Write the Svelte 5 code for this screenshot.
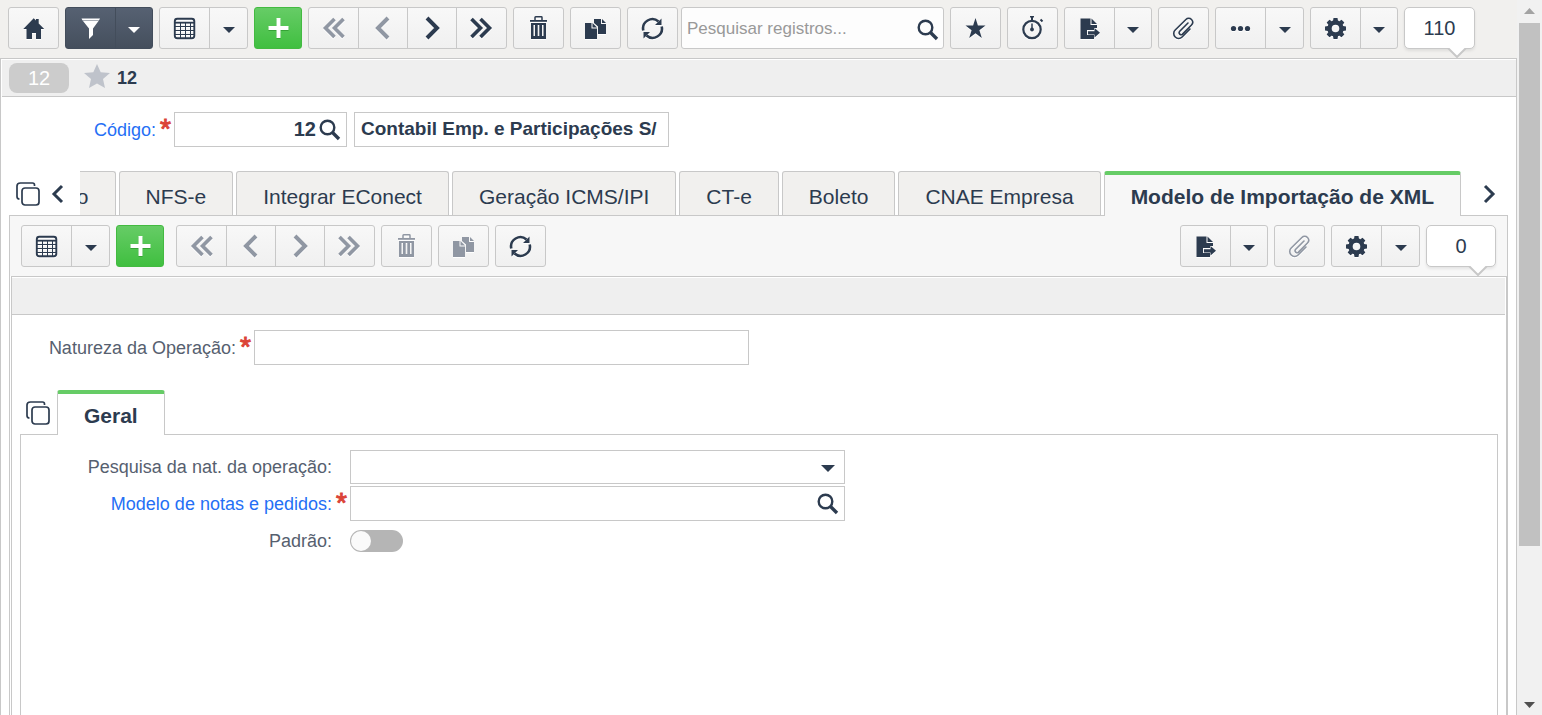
<script lang="ts">
  interface ITool {
    label: string;
    icon: string;
    menu?: boolean;
    disabled?: boolean;
    kind?: string;
  }

  const tabs = [
    "o",
    "NFS-e",
    "Integrar EConect",
    "Geração ICMS/IPI",
    "CT-e",
    "Boleto",
    "CNAE Empresa",
    "Modelo de Importação de XML",
  ];
  let activeTab = $state(tabs.length - 1);

  let search = $state("");
  let code = $state("12");
  let company = $state("Contabil Emp. e Participações S/");
  let nature = $state("");
  let natureSearch = $state("");
  let model = $state("");
  let isDefault = $state(false);

  const recordTools: ITool[] = [
    { label: "Excluir", icon: "trash" },
    { label: "Duplicar", icon: "pages" },
    { label: "Atualizar", icon: "refresh" },
  ];

  const actionTools: ITool[] = [
    { label: "Favoritos", icon: "star" },
    { label: "Histórico", icon: "timer" },
    { label: "Exportar", icon: "export", menu: true },
    { label: "Anexos", icon: "clip" },
    { label: "Mais", icon: "dots", menu: true, kind: "wide" },
    { label: "Configurações", icon: "gear", menu: true },
  ];

  const detailTools: ITool[] = [
    { label: "Exportar", icon: "export", menu: true },
    { label: "Anexos", icon: "clip", disabled: true },
    { label: "Configurações", icon: "gear", menu: true, kind: "wide" },
  ];

  const navTools = [
    { label: "Primeiro", icon: "first" },
    { label: "Anterior", icon: "prev" },
    { label: "Próximo", icon: "next" },
    { label: "Último", icon: "last" },
  ];
</script>

{#snippet icon(name: string)}
  <svg class="icon" width="25" height="24" viewBox="0 0 25 24" aria-hidden="true">
    {#if name === "home"}
      <path d="M12.7 2.3 15 4.600V3h2.700v4.500L23.200 13H20v10h-5v-6h-4v6H5.500V13H2.300z" fill="currentColor" />
    {:else if name === "filter"}
      <path d="M3.500 2.500h18.500l-.8 1.500H4.300zM5 5h15.500L15 12.500V19l-4 4V12.500z" fill="currentColor" />
      <path d="M4.500 4.500h16.500" stroke="currentColor" stroke-opacity=".5" />
    {:else if name === "table"}
      <path d="M8.500 7v15M13.500 7v15M18.500 7v15M3 10.500h19M3 14.500h19M3 18.500h19" stroke="currentColor" fill="none" />
      <rect x="2.800" y="2.800" width="19.500" height="19.500" rx="2.500" fill="none" stroke="currentColor" stroke-width="1.900" />
      <path d="M3 6.700h19" stroke="currentColor" stroke-width="1.800" />
    {:else if name === "plus"}
      <path d="M12.500 2v20M2.500 12h20" stroke="currentColor" stroke-width="4" />
    {:else if name === "first"}
      <path d="M13.500 3 4.500 12l9 9M22.500 3l-9 9 9 9" fill="none" stroke="currentColor" stroke-width="3.600" />
    {:else if name === "prev"}
      <path d="m17 2-10 10 10 10" fill="none" stroke="currentColor" stroke-width="4" />
    {:else if name === "next"}
      <path d="m7 2 10 10-10 10" fill="none" stroke="currentColor" stroke-width="4" />
    {:else if name === "last"}
      <path d="m2.500 3 9 9-9 9M11.500 3l9 9-9 9" fill="none" stroke="currentColor" stroke-width="3.600" />
    {:else if name === "trash"}
      <path d="M9 4V1.500Q9 .8 9.700.8h5.600q.7 0 .7.700V4" fill="none" stroke="currentColor" stroke-width="1.500" />
      <path d="M4 4h17v1.800H4z" fill="currentColor" />
      <path d="M5 7h15v16H5zM7.500 9v11h1.500V9zM11.700 9v11h1.600V9zM16 9v11h1.500V9z" fill="currentColor" fill-rule="evenodd" />
    {:else if name === "pages"}
      <path d="M11 3h7v5h5v10h-8v-7.500L11 7zM19 3l4 4h-4z" fill="currentColor" />
      <path d="M2 7h6.500v5.500H14V23H2zM9.500 7 14 11.500H9.500z" fill="currentColor" />
    {:else if name === "refresh"}
      <path d="M3.300 14.500A9.300 9.300 0 0 1 18.500 5.500M21.700 10.500A9.300 9.300 0 0 1 6.500 19.500" fill="none" stroke="currentColor" stroke-width="2.600" />
      <path d="M21.500 2.500V9h-6.500zM3.500 22.500V16H10z" fill="currentColor" />
    {:else if name === "search"}
      <circle cx="10.500" cy="10.500" r="6.800" fill="none" stroke="currentColor" stroke-width="2.400" />
      <path d="m15 15 7 7" stroke="currentColor" stroke-width="3.400" />
    {:else if name === "star"}
      <path d="m12.500 2 2.400 7.600h7.600l-6.100 4.600 2.400 7.800-6.300-4.700L6.200 22l2.400-7.800-6.100-4.600h7.600z" fill="currentColor" />
    {:else if name === "timer"}
      <circle cx="12" cy="13.500" r="8.700" fill="none" stroke="currentColor" stroke-width="2.200" />
      <path d="M10 .5h4M12 1v4M20.500 3.500l2 2" fill="none" stroke="currentColor" stroke-width="2" />
      <path d="M12 7.500v5" stroke="currentColor" stroke-width="1.500" />
      <circle cx="12" cy="13.500" r="1.900" fill="currentColor" />
    {:else if name === "export"}
      <path d="M3.500 2.500h10V9H20v3h-3v2h-7v5h7v4H3.500zM14.500 2.500 20 8h-5.500z" fill="currentColor" />
      <path d="M11 15.300h6.500V12l5.500 4.800-5.500 4.700v-3H11z" fill="currentColor" />
    {:else if name === "clip"}
      <path d="m17 7-8.500 8.500a2 2 0 0 0 2.800 2.800L20.500 9a4 4 0 0 0 0-5.500 4 4 0 0 0-5.600 0L4.200 14a4.900 4.900 0 0 0 0 7 4.900 4.900 0 0 0 6.900 0l7.900-8" fill="none" stroke="currentColor" stroke-width="1.600" stroke-linecap="round" />
    {:else if name === "dots"}
      <circle cx="5.500" cy="12.500" r="2.600" fill="currentColor" />
      <circle cx="12.500" cy="12.500" r="2.600" fill="currentColor" />
      <circle cx="19.500" cy="12.500" r="2.600" fill="currentColor" />
    {:else if name === "gear"}
      <circle cx="12.500" cy="12.500" r="6" fill="none" stroke="currentColor" stroke-width="4.400" />
      {#each [0, 45, 90, 135] as angle}
        <path d="M10.500 2h4l.5 3h-5zM10.500 23h4l.5-3h-5z" fill="currentColor" transform="rotate({angle} 12.500 12.500)" />
      {/each}
    {:else if name === "windows"}
      <path d="M18.500 4V3q0-2-2-2h-12Q1 1 1 4v10.500q0 2.500 2.500 2.500" fill="none" stroke="currentColor" stroke-width="1.700" />
      <rect x="6" y="6" width="17" height="17" rx="3" fill="none" stroke="currentColor" stroke-width="1.700" />
    {:else if name === "left"}
      <path d="m17 4-8 8 8 8" fill="none" stroke="currentColor" stroke-width="3" />
    {:else if name === "right"}
      <path d="m8 4 8 8-8 8" fill="none" stroke="currentColor" stroke-width="3" />
    {/if}
  </svg>
{/snippet}

{#snippet caret()}
  <svg class="caret" width="12" height="6" viewBox="0 0 12 6" aria-hidden="true">
    <path d="M0 0h12L6 6z" fill="currentColor" />
  </svg>
{/snippet}

{#snippet required(mark: string)}
  <span class="required">{mark}</span>
{/snippet}

{#snippet tool(item: ITool)}
  <div class="group {item.kind ?? ''}">
    <button class="btn" aria-label={item.label} disabled={item.disabled}>{@render icon(item.icon)}</button>
    {#if item.menu}
      <button class="btn btn_menu" aria-label="{item.label}: opções">{@render caret()}</button>
    {/if}
  </div>
{/snippet}

{#snippet nav(disabledCount: number)}
  <div class="group nav">
    {#each navTools as item, index}
      <button class="btn" aria-label={item.label} disabled={index < disabledCount}>{@render icon(item.icon)}</button>
    {/each}
  </div>
{/snippet}

{#snippet counter(value: number)}
  <div class="counter">
    {value}
    <svg class="counter_tip" width="20" height="10" viewBox="0 0 20 10" aria-hidden="true">
      <path d="M1 0h18l-9 9z" fill="#fff" />
      <path d="m1 0 9 9 9-9" fill="none" stroke="#c8c8c8" stroke-width="2" />
    </svg>
  </div>
{/snippet}

<div class="page">
  <main>
    <div class="toolbar">
      {@render tool({ label: "Início", icon: "home" })}
      {@render tool({ label: "Filtro", icon: "filter", menu: true, kind: "dark" })}
      {@render tool({ label: "Grade", icon: "table", menu: true, kind: "wide" })}
      {@render tool({ label: "Novo", icon: "plus", kind: "green" })}
      {@render nav(2)}
      {#each recordTools as item}
        {@render tool(item)}
      {/each}
      <div class="search">
        <input type="text" aria-label="Pesquisar registros" placeholder="Pesquisar registros..." bind:value={search} />
        <button class="plain" aria-label="Pesquisar">{@render icon("search")}</button>
      </div>
      {#each actionTools as item}
        {@render tool(item)}
      {/each}
      {@render counter(110)}
    </div>

    <div class="record">
      <div class="titlebar">
        <span class="badge">12</span>
        <button class="plain favorite" aria-label="Favoritar">
          <svg width="26" height="24" viewBox="0 0 26 24" aria-hidden="true">
            <path d="m13 0 3.700 8.200 9.300.8-7 6 2 9-8-4.500L5 24l2-9-7-6 9.300-.8z" fill="#bfc3cb" />
          </svg>
        </button>
        <strong>12</strong>
      </div>

      <div class="field code">
        <label class="link" for="code">Código:</label>{@render required("*")}
        <div class="box box_code">
          <input id="code" type="text" bind:value={code} />
          <button class="plain" aria-label="Pesquisar código">{@render icon("search")}</button>
        </div>
        <div class="box box_company">
          <input type="text" aria-label="Empresa" bind:value={company} />
        </div>
      </div>

      <div class="tabrow">
        <button class="plain" aria-label="Expandir abas">{@render icon("windows")}</button>
        <button class="plain scroll_left" aria-label="Abas anteriores">{@render icon("left")}</button>
        <div class="tabs" role="tablist">
          {#each tabs as tab, index}
            <button
              class="tab"
              class:active={index === activeTab}
              role="tab"
              aria-selected={index === activeTab}
              onclick={() => (activeTab = index)}>{tab}</button
            >
          {/each}
        </div>
        <button class="plain scroll_right" aria-label="Próximas abas">{@render icon("right")}</button>
      </div>

      <section class="detail">
        <div class="toolbar toolbar_detail">
          {@render tool({ label: "Grade", icon: "table", menu: true, kind: "wide" })}
          {@render tool({ label: "Novo", icon: "plus", kind: "green" })}
          <div class="detail_nav">{@render nav(4)}</div>
          {@render tool({ label: "Excluir", icon: "trash", disabled: true })}
          {@render tool({ label: "Duplicar", icon: "pages", disabled: true })}
          {@render tool({ label: "Atualizar", icon: "refresh" })}
          <div class="spacer"></div>
          {#each detailTools as item}
            {@render tool(item)}
          {/each}
          {@render counter(0)}
        </div>

        <div class="detail_body">
          <div class="titlebar"></div>
          <div class="field nature">
            <label for="nature">Natureza da Operação:</label>{@render required("*")}
            <div class="box box_wide">
              <input id="nature" type="text" bind:value={nature} />
            </div>
          </div>

          <div class="tabrow tabrow_inner">
            <button class="plain" aria-label="Expandir abas">{@render icon("windows")}</button>
            <div class="tabs tabs_inner" role="tablist">
              <button class="tab active" role="tab" aria-selected="true">Geral</button>
            </div>
          </div>

          <div class="general">
            <div class="field field_select">
              <label for="natureSearch">Pesquisa da nat. da operação:</label>{@render required("")}
              <div class="box box_wide box_select">
                <select id="natureSearch" bind:value={natureSearch}>
                  <option value=""></option>
                </select>
                {@render caret()}
              </div>
            </div>
            <div class="field">
              <label class="link" for="model">Modelo de notas e pedidos:</label>{@render required("*")}
              <div class="box box_wide">
                <input id="model" type="text" bind:value={model} />
                <button class="plain" aria-label="Pesquisar modelo">{@render icon("search")}</button>
              </div>
            </div>
            <div class="field">
              <label for="isDefault">Padrão:</label>{@render required("")}
              <input id="isDefault" class="toggle" type="checkbox" bind:checked={isDefault} />
            </div>
          </div>
        </div>
      </section>
    </div>
  </main>

  <div class="scrollbar" aria-hidden="true">
    <svg width="11" height="6" viewBox="0 0 11 6"><path d="M0 6h11L5.500 0z" fill="#a3a3a3" /></svg>
    <div class="track"><div class="thumb"></div></div>
    <svg width="11" height="6" viewBox="0 0 11 6"><path d="M0 0h11L5.500 6z" fill="#505050" /></svg>
  </div>
</div>

<style>
  :global(body) {
    margin: 0;
    background: #fff;
  }

  .page {
    display: flex;
    height: 100vh;
    overflow: hidden;
    color: #2c3b4f;
    font-family: "Liberation Sans", Arial, sans-serif;
    font-size: 18px;
  }

  .page * {
    box-sizing: border-box;
  }

  main {
    display: flex;
    flex: 1;
    flex-direction: column;
    min-width: 0;
  }

  button,
  input,
  select {
    margin: 0;
    padding: 0;
    border: 0;
    outline: 0;
    background: none;
    color: inherit;
    font: inherit;
  }

  svg {
    display: block;
    flex: none;
  }

  .toolbar {
    display: flex;
    gap: 6px;
    padding: 7px 8px 9px;
    background: #f1f0ee;
  }

  .group {
    display: flex;
    flex: none;
    border: 1px solid #c8c8c8;
    border-radius: 3px;
    background: linear-gradient(#f8f8f8, #f0f0f0);
  }

  .btn {
    display: flex;
    align-items: center;
    justify-content: center;
    width: 49px;
    height: 40px;
  }
  .btn + .btn {
    border-left: 1px solid #c8c8c8;
  }
  .btn .icon {
    filter: drop-shadow(0 1px 0 #fff);
  }
  .btn:disabled {
    color: #9097a3;
  }
  .btn_menu {
    width: 37px;
    padding-top: 4px;
  }
  .wide .btn_menu {
    width: 38px;
  }
  .nav .btn:last-child {
    width: 50px;
  }

  .dark {
    border-color: #434d5b;
    background: linear-gradient(#566172, #454f5d);
    color: #fff;
  }
  .dark .btn + .btn {
    border-color: #434d5b;
  }
  .dark .icon {
    filter: none;
  }

  .green {
    border-color: #43ba41;
    background: linear-gradient(#66cc66, #40bf40);
    color: #fff;
  }
  .green .btn {
    width: 46px;
  }
  .green .icon {
    filter: drop-shadow(0 1px 0 #36a336);
  }

  .search {
    display: flex;
    flex: 1;
    align-items: center;
    min-width: 0;
    margin-left: -3px;
    padding: 2px 3px 0 5px;
    border: 1px solid #c8c8c8;
    border-radius: 3px;
    background: #fdfdfd;
    font-size: 17px;
  }
  .search input {
    flex: 1;
    min-width: 0;
  }
  .search input::placeholder {
    color: #999;
    opacity: 1;
  }

  .counter {
    position: relative;
    flex: none;
    width: 71px;
    height: 42px;
    margin-right: 34px;
    border: 1px solid #c8c8c8;
    border-radius: 5px;
    background: #fff;
    box-shadow: 0 2px 3px rgba(0, 0, 0, 0.08);
    font-size: 20px;
    line-height: 40px;
    text-align: center;
  }
  .counter_tip {
    position: absolute;
    top: 40px;
    right: 7px;
  }

  .plain {
    display: flex;
    flex: none;
    align-items: center;
    justify-content: center;
  }

  .record {
    display: flex;
    flex: 1;
    flex-direction: column;
    border: 1px solid #c8c8c8;
    border-bottom: 0;
    background: #fff;
  }

  .titlebar {
    display: flex;
    align-items: center;
    height: 38px;
    margin: 0 0 0 1px;
    padding-left: 7px;
    border-top: 1px solid #fff;
    border-bottom: 1px solid #c8c8c8;
    background: #efefef;
  }

  .badge {
    width: 60px;
    height: 30px;
    border-radius: 8px;
    background: #ccc;
    color: #fff;
    font-size: 20px;
    line-height: 30px;
    text-align: center;
  }

  .favorite {
    margin: 0 7px 4px 15px;
  }

  .field {
    display: flex;
    align-items: center;
    height: 35px;
  }

  label {
    padding-top: 1px;
    color: #56606f;
    text-align: right;
  }
  .link {
    color: #256ff5;
  }

  .required {
    flex: none;
    width: 18px;
    height: 28px;
    padding-left: 1px;
    color: #db4437;
    font-size: 28px;
    line-height: 26px;
    text-align: center;
    -webkit-text-stroke: 1px #db4437;
  }

  .box {
    display: flex;
    align-items: center;
    height: 35px;
    border: 1px solid #c8c8c8;
    background: #fff;
  }
  .box input {
    flex: 1;
    min-width: 0;
    height: 100%;
    padding: 0 6px;
    font-size: 20px;
    font-weight: bold;
  }
  .box .plain {
    width: 30px;
    padding: 0 3px 2px 0;
  }

  .code {
    margin: 15px 0 24px;
  }
  .code label {
    width: 155px;
  }
  .box_code {
    width: 173px;
    margin-right: 7px;
  }
  .box_code input {
    padding: 0;
    text-align: right;
  }
  .box_company {
    width: 315px;
  }
  .box_company input {
    margin-right: 5px;
    padding: 0 0 2px 6px;
    font-size: 19px;
  }

  .box_wide {
    width: 495px;
  }

  .tabrow {
    position: relative;
    z-index: 1;
    display: flex;
    align-items: center;
    height: 45px;
    margin-bottom: -1px;
    padding-left: 15px;
  }
  .scroll_left {
    width: 39px;
    padding-right: 6px;
  }
  .scroll_right {
    width: 55px;
    padding-left: 2px;
  }

  .tabs {
    display: flex;
    flex: 1;
    gap: 3px;
    justify-content: flex-end;
    height: 45px;
    min-width: 0;
    overflow: hidden;
  }

  .tab {
    flex: none;
    height: 44px;
    padding: 6px 26px 0;
    border: 1px solid #c8c8c8;
    border-bottom: 0;
    border-radius: 3px 3px 0 0;
    background: #f1f0ee;
    font-size: 21px;
  }
  .tab.active {
    height: 45px;
    padding-top: 3px;
    border-top: 4px solid #66cc66;
    background: #f7f7f7;
    font-weight: bold;
  }

  .detail {
    display: flex;
    flex: 1;
    flex-direction: column;
    margin: 0 8px;
    border: 1px solid #c8c8c8;
    border-bottom: 0;
  }

  .toolbar_detail {
    padding: 9px 11px;
    background: #f7f7f7;
  }
  .toolbar_detail .counter {
    width: 70px;
    margin-right: 0;
  }
  .detail_nav {
    margin-left: 6px;
  }
  .spacer {
    flex: 1;
  }

  .detail_body {
    display: flex;
    flex: 1;
    flex-direction: column;
    margin-left: 1px;
    border: 1px solid #c8c8c8;
    border-bottom: 0;
  }
  .detail_body .titlebar {
    margin: 0 1px 0 0;
  }

  .nature {
    margin: 15px 0 25px;
  }
  .nature label {
    width: 224px;
  }

  .tabrow_inner {
    padding-left: 14px;
  }
  .tabs_inner {
    justify-content: flex-start;
    margin-left: 6px;
  }
  .tabs_inner .tab {
    background: #fff;
  }

  .general {
    display: flex;
    flex: 1;
    flex-direction: column;
    gap: 2px;
    margin: 0 8px;
    padding-top: 15px;
    border: 1px solid #c8c8c8;
    border-bottom: 0;
  }
  .general label {
    width: 311px;
  }

  .field_select {
    height: 34px;
  }
  .box_select {
    position: relative;
    height: 34px;
  }
  .box_select select {
    width: 100%;
    height: 100%;
    padding: 0 32px 0 6px;
    appearance: none;
  }
  .box_select .caret {
    position: absolute;
    top: 14px;
    right: 9px;
    width: 14px;
    height: 7px;
    pointer-events: none;
  }

  .toggle {
    display: flex;
    width: 53px;
    height: 22px;
    padding: 1px;
    border-radius: 11px;
    background: #b5b5b5;
    appearance: none;
  }
  .toggle::before {
    width: 20px;
    height: 20px;
    border-radius: 50%;
    background: #fafafa;
    content: "";
  }
  .toggle:checked {
    justify-content: flex-end;
    background: #66cc66;
  }

  .scrollbar {
    display: flex;
    flex: none;
    flex-direction: column;
    align-items: center;
    width: 25px;
    padding: 8px 2px 7px;
    background: #f1f1f1;
  }
  .track {
    flex: 1;
    align-self: stretch;
    margin: 9px 0;
  }
  .thumb {
    height: 78%;
    background: #c1c1c1;
  }
</style>
